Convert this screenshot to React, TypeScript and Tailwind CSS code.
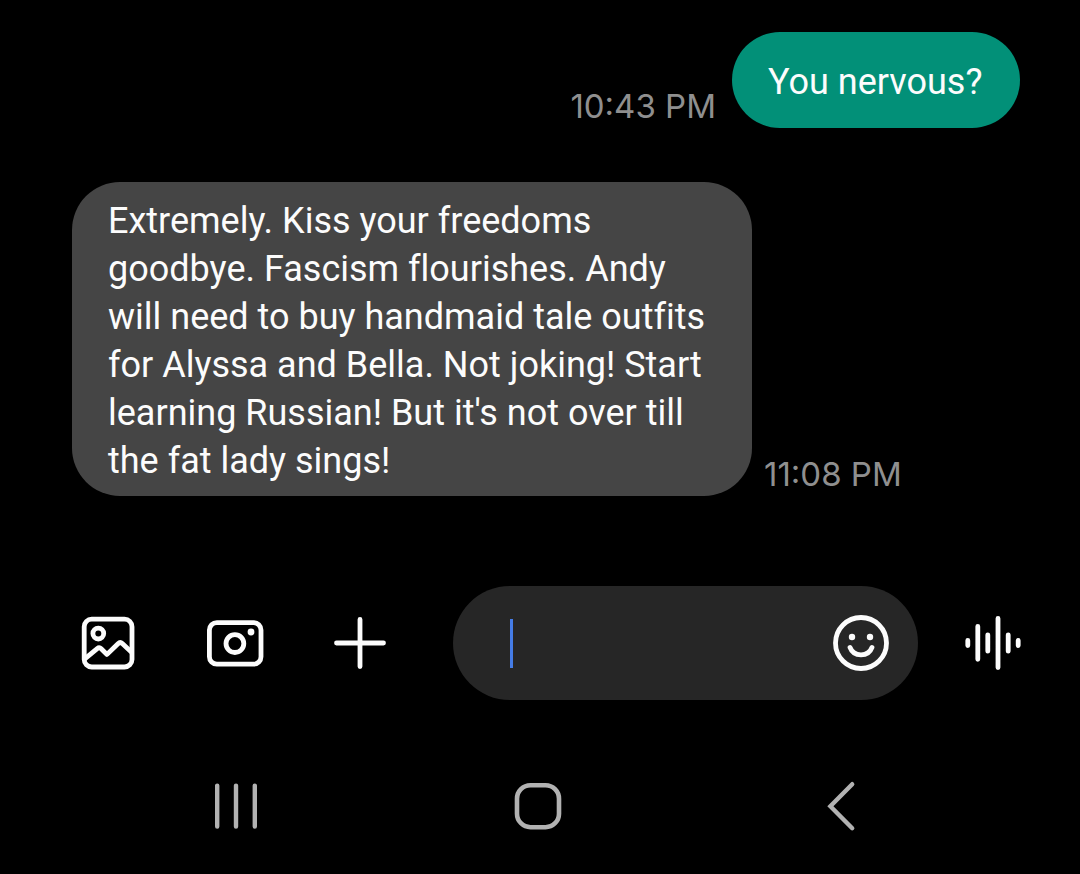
import type { ReactNode } from "react";

type Message = {
  id: number;
  text: string;
  time: string;
  outgoing: boolean;
};

const messages: Message[] = [
  { id: 1, text: "You nervous?", time: "10:43 PM", outgoing: true },
  {
    id: 2,
    text: "Extremely. Kiss your freedoms goodbye. Fascism flourishes. Andy will need to buy handmaid tale outfits for Alyssa and Bella. Not joking! Start learning Russian! But it's not over till the fat lady sings!",
    time: "11:08 PM",
    outgoing: false,
  },
];

function MessageRow({ message }: { message: Message }) {
  const bubble = message.outgoing ? "bg-[#029078] pt-[26px] pb-[22px]" : "bg-[#454545] pt-[15px] pb-[11px]";
  return (
    <li className={`flex items-end ${message.outgoing ? "flex-row-reverse gap-4" : "flex-row gap-3"}`}>
      <p
        className={`max-w-[680px] min-w-72 rounded-[48px] px-9 text-[36px] leading-[48px] text-[#fcfcfc] [font-variant-ligatures:none] ${bubble}`}
      >
        {message.text}
      </p>
      <time className="shrink-0 font-['Inter',sans-serif] text-[33px] leading-[44px] text-[#8f8f8f]">
        {message.time}
      </time>
    </li>
  );
}

function IconButton({ label, children }: { label: string; children: ReactNode }) {
  return (
    <button type="button" aria-label={label} className="size-14 shrink-0">
      <svg
        viewBox="0 0 56 56"
        className="size-14 overflow-visible"
        fill="none"
        stroke="currentColor"
        strokeWidth="4.8"
        strokeLinecap="round"
        strokeLinejoin="round"
        aria-hidden="true"
      >
        {children}
      </svg>
    </button>
  );
}

function Composer() {
  return (
    <form className="flex items-center pr-[59px] pl-20 text-[#fcfcfc]" onSubmit={(e) => e.preventDefault()}>
      <div className="flex gap-[70px]">
        <IconButton label="Gallery">
          <rect x="4.2" y="4.2" width="47.8" height="47.8" rx="7.5" />
          <circle cx="18.3" cy="18.6" r="5.4" />
          <path d="M4.8 43.8 L17.2 33.6 Q19.3 31.9 21.2 33.8 L27 39.4 L38 28.7 Q40.2 26.6 42.3 28.6 L51.3 37" />
        </IconButton>
        <IconButton label="Camera">
          <rect x="3.4" y="7.6" width="51.6" height="41.6" rx="7.5" />
          <circle cx="28.9" cy="28.6" r="8.9" />
          <circle cx="45" cy="17" r="3.4" fill="currentColor" stroke="none" />
        </IconButton>
        <IconButton label="More options">
          <path d="M28 4.5 V51.5 M4.5 28 H51.5" />
        </IconButton>
      </div>
      <div className="ml-[65px] flex h-[114px] min-w-0 flex-1 items-center rounded-full bg-[#262626] pr-[29px] pl-[57px]">
        <span className="h-[49px] w-[3px] shrink-0 bg-[#457ce6]" />
        <input
          type="text"
          aria-label="Message"
          className="min-w-0 flex-1 bg-transparent text-[36px] leading-[48px] caret-transparent outline-none"
        />
        <IconButton label="Emoji">
          <circle cx="28" cy="28" r="25.5" />
          <circle cx="19" cy="22" r="3.2" fill="currentColor" stroke="none" />
          <circle cx="37" cy="22" r="3.2" fill="currentColor" stroke="none" />
          <path d="M17 32.4 C18.6 36.8 22.8 39.8 28 39.8 S37.4 36.8 39 32.4" />
        </IconButton>
      </div>
      <div className="ml-[47px] flex">
        <IconButton label="Voice message">
          <path d="M2.8 25.5 V30.5 M12.8 11.5 V44.3 M22.8 19.8 V36.2 M33 3.5 V52.5 M43.2 19.8 V36.2 M53.2 25.5 V30.5" />
        </IconButton>
      </div>
    </form>
  );
}

function NavigationBar() {
  return (
    <nav aria-label="System" className="flex items-center justify-between pr-[211px] pl-[208px] text-[#b2b2b2]">
      <IconButton label="Recent apps">
        <path d="M9.2 7.6 V48.6 M28 7.6 V48.6 M46.8 7.6 V48.6" strokeWidth="4.4" />
      </IconButton>
      <IconButton label="Home">
        <rect x="6" y="7.2" width="42" height="42" rx="13.5" strokeWidth="4.6" />
      </IconButton>
      <IconButton label="Back">
        <path d="M39.2 6.2 L17.4 28.2 L39.2 50.2" strokeWidth="4.4" strokeLinejoin="miter" />
      </IconButton>
    </nav>
  );
}

export default function App() {
  return (
    <main className="flex min-h-screen flex-col bg-black font-['Roboto',sans-serif]">
      <ul className="flex flex-col gap-[54px] pt-8 pr-[60px] pb-[90px] pl-[72px]">
        {messages.map((message) => (
          <MessageRow key={message.id} message={message} />
        ))}
      </ul>
      <Composer />
      <div className="pt-[78px] pb-10">
        <NavigationBar />
      </div>
    </main>
  );
}
